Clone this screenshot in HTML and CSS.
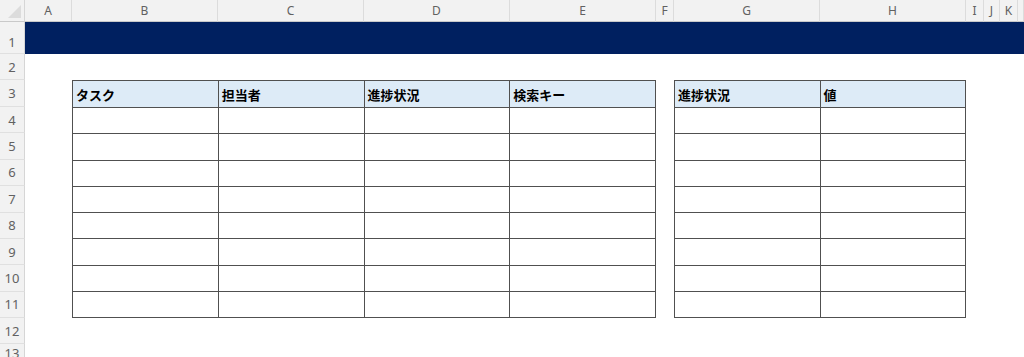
FILE: index.html
```html
<!DOCTYPE html>
<html lang="ja">
<head>
    <meta charset="UTF-8">
    <title>タスク管理シート</title>
    <link rel="stylesheet" href="styles.css">
</head>
<body>
<div class="sheet">
    <div class="corner"><div class="corner-tri"></div></div>
    <div class="col">A</div>
    <div class="col">B</div>
    <div class="col">C</div>
    <div class="col">D</div>
    <div class="col">E</div>
    <div class="col">F</div>
    <div class="col">G</div>
    <div class="col">H</div>
    <div class="col">I</div>
    <div class="col">J</div>
    <div class="col">K</div>
    <div class="col"></div>

    <div class="rownum r1">1</div>
    <div class="rownum">2</div>
    <div class="rownum">3</div>
    <div class="rownum">4</div>
    <div class="rownum">5</div>
    <div class="rownum">6</div>
    <div class="rownum">7</div>
    <div class="rownum">8</div>
    <div class="rownum">9</div>
    <div class="rownum">10</div>
    <div class="rownum">11</div>
    <div class="rownum">12</div>
    <div class="rownum">13</div>

    <div class="band"></div>

    <div class="task-wrap">
        <table class="grid-table">
            <tr class="head-row"><th>タスク</th><th>担当者</th><th>進捗状況</th><th>検索キー</th></tr>
            <tr><td></td><td></td><td></td><td></td></tr>
            <tr><td></td><td></td><td></td><td></td></tr>
            <tr><td></td><td></td><td></td><td></td></tr>
            <tr><td></td><td></td><td></td><td></td></tr>
            <tr><td></td><td></td><td></td><td></td></tr>
            <tr><td></td><td></td><td></td><td></td></tr>
            <tr><td></td><td></td><td></td><td></td></tr>
            <tr><td></td><td></td><td></td><td></td></tr>
        </table>
    </div>

    <div class="status-wrap">
        <table class="grid-table">
            <tr class="head-row"><th>進捗状況</th><th>値</th></tr>
            <tr><td></td><td></td></tr>
            <tr><td></td><td></td></tr>
            <tr><td></td><td></td></tr>
            <tr><td></td><td></td></tr>
            <tr><td></td><td></td></tr>
            <tr><td></td><td></td></tr>
            <tr><td></td><td></td></tr>
            <tr><td></td><td></td></tr>
        </table>
    </div>
</div>
</body>
</html>
```

FILE: styles.css
```css
html, body {
    margin: 0;
    padding: 0;
    background: #fff;
    overflow: hidden;
}

.sheet {
    display: grid;
    grid-template-columns: 25px 47px 146px 146px 146px 146px 18px 146px 146px 18px 16px 18px 1fr;
    grid-template-rows: 22px 32px 26px 27px repeat(8, 26.375px) 26px 1fr;
    width: 1024px;
    height: 357px;
    font-family: "Noto Sans", "Noto Sans CJK JP", sans-serif;
}

.corner {
    position: relative;
    background: #f2f2f2;
    border-right: 1px solid #d6d6d6;
    border-bottom: 1px solid #c9c9c9;
}
.corner-tri {
    position: absolute;
    right: 3px;
    bottom: 3px;
    width: 0;
    height: 0;
    border-left: 13px solid transparent;
    border-bottom: 13px solid #dcdcdc;
}

.col {
    background: #f2f2f2;
    border-right: 1px solid #dcdcdc;
    border-bottom: 1px solid #c9c9c9;
    color: #616161;
    font-size: 12px;
    display: flex;
    align-items: center;
    justify-content: center;
}
.col:last-child {
    border-right: none;
}

.rownum {
    grid-column: 1;
    background: #f2f2f2;
    border-right: 1px solid #d6d6d6;
    border-bottom: 1px solid #e0e0e0;
    color: #616161;
    font-size: 13px;
    display: flex;
    align-items: center;
    justify-content: center;
    box-sizing: border-box;
}
.rownum.r1 {
    padding-top: 8px;
}

.band {
    grid-column: 2 / -1;
    grid-row: 2;
    background: #002060;
}

.task-wrap {
    grid-column: 3 / 7;
    grid-row: 4 / 13;
}
.status-wrap {
    grid-column: 8 / 10;
    grid-row: 4 / 13;
}

.grid-table {
    width: 100%;
    height: 100%;
    border-collapse: collapse;
    table-layout: fixed;
}
.grid-table th,
.grid-table td {
    border: 1px solid #505050;
    padding: 0 0 0 3px;
}
.grid-table th {
    background: #ddebf7;
    color: #000;
    font-family: "Noto Sans CJK JP", sans-serif;
    font-size: 13px;
    font-weight: bold;
    text-align: left;
    height: 26px;
}
```
